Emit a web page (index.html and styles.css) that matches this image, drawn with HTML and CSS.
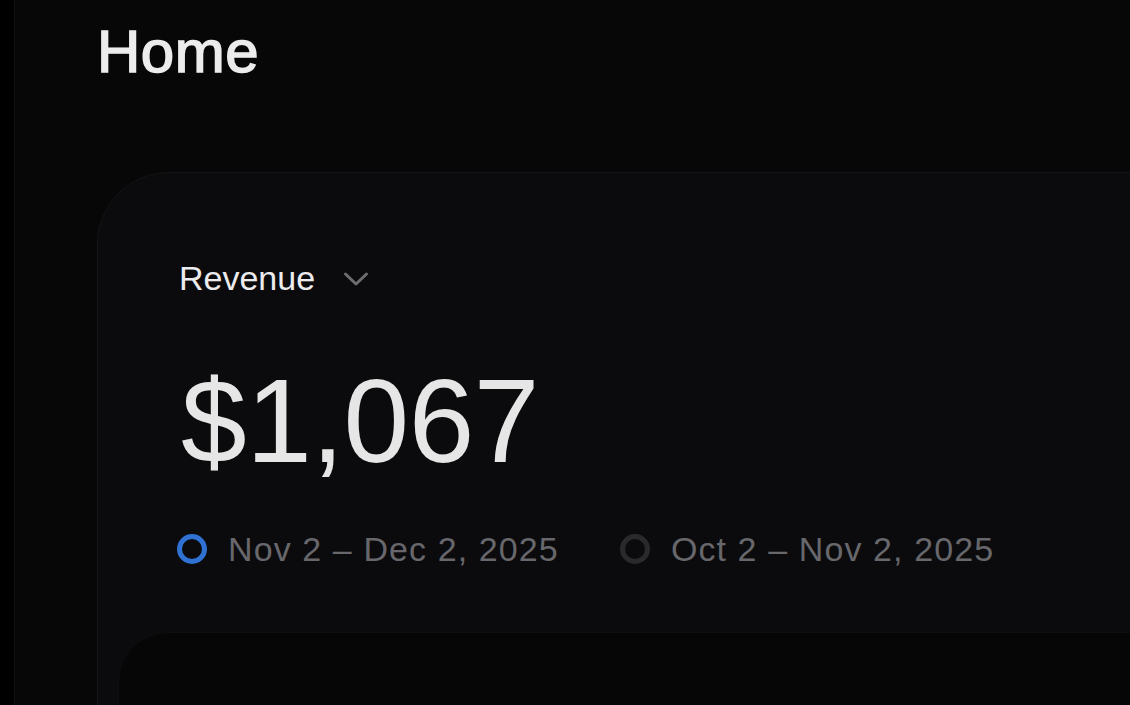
FILE: index.html
```html
<!DOCTYPE html>
<html lang="en">
<head>
<meta charset="utf-8">
<title>Home</title>
<link rel="stylesheet" href="styles.css">
</head>
<body>
<div class="app">
  <aside class="rail"></aside>
  <main class="main">
    <h1 class="title">Home</h1>
    <section class="card">
      <div class="card-body">
        <button class="metric-select">
          <span>Revenue</span>
          <svg class="chev" width="26" height="16" viewBox="0 0 26 16" fill="none"><path d="M2.5 3 L13 13 L23.5 3" stroke="#6d6d71" stroke-width="3" stroke-linecap="round" stroke-linejoin="round"/></svg>
        </button>
        <div class="amount">$1,067</div>
        <div class="legend">
          <div class="legend-item">
            <span class="dot dot-current"></span>
            <span class="legend-text">Nov 2 – Dec 2, 2025</span>
          </div>
          <div class="legend-item">
            <span class="dot dot-previous"></span>
            <span class="legend-text">Oct 2 – Nov 2, 2025</span>
          </div>
        </div>
      </div>
      <div class="chart-panel"></div>
    </section>
  </main>
</div>
</body>
</html>
```

FILE: styles.css
```css
html, body {
  margin: 0;
  padding: 0;
  background: #070707;
  overflow: hidden;
  height: 100%;
}

body {
  font-family: "Liberation Sans", Arial, sans-serif;
  color: #ececec;
}

.app {
  display: flex;
  height: 705px;
  overflow: hidden;
}

.rail {
  width: 14px;
  flex: none;
  background: #000;
  border-right: 1px solid #111112;
}

.main {
  flex: 1;
  padding-left: 82px;
  min-width: 0;
}

.title {
  margin: 0;
  padding-top: 17px;
  font-size: 60px;
  font-weight: 400;
  line-height: 70px;
  color: #ececec;
  letter-spacing: 0.5px;
  -webkit-text-stroke: 1.5px #ececec;
}

.card {
  margin-top: 85px;
  width: 1200px;
  height: 620px;
  background: #0b0b0d;
  border: 1px solid #141417;
  border-radius: 72px;
  box-sizing: border-box;
}

.card-body {
  padding: 85px 0 0 81px;
}

.metric-select {
  display: flex;
  align-items: center;
  gap: 28px;
  background: none;
  border: 0;
  padding: 0;
  font: inherit;
  font-size: 34px;
  color: #ececee;
  line-height: 40px;
  cursor: pointer;
}

.chev {
  margin-top: 2px;
}

.amount {
  margin-top: 61px;
  font-size: 118px;
  line-height: 124px;
  color: #e6e6e7;
  letter-spacing: -0.5px;
  margin-left: 2px;
}

.legend {
  display: flex;
  align-items: center;
  gap: 63px;
  margin-top: 46px;
}

.legend-item {
  display: flex;
  align-items: center;
  gap: 21px;
}

.dot {
  width: 30px;
  height: 30px;
  border-radius: 50%;
  box-sizing: border-box;
  border: 5px solid #2f72d4;
  margin-left: -2px;
}

.dot-previous {
  border-color: #2a2a2d;
}

.legend-text {
  font-size: 34px;
  line-height: 40px;
  color: #67676c;
  letter-spacing: 1.1px;
}

.chart-panel {
  margin: 63px 0 0 20px;
  height: 200px;
  background: #060606;
  border: 1px solid #0e0e10;
  border-radius: 50px;
}
```
